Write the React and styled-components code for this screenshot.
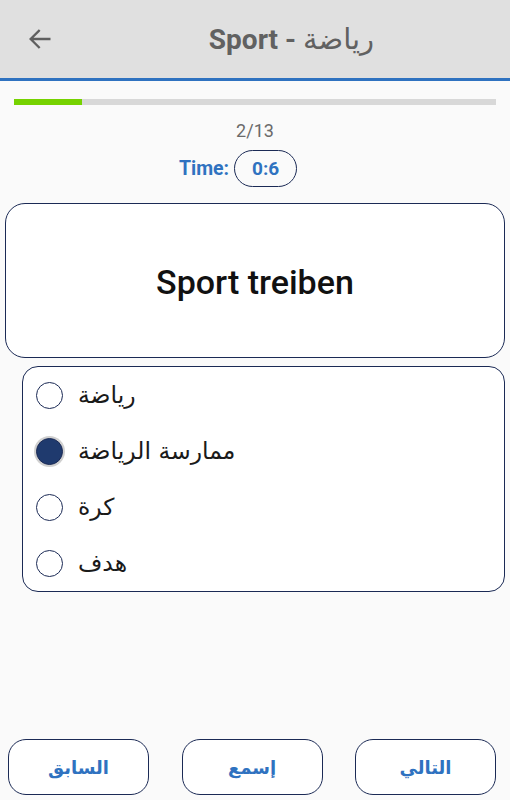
import styled, { createGlobalStyle } from 'styled-components';

const GlobalStyle = createGlobalStyle`
  html, body { margin: 0; padding: 0; background: #fafafa; }
  body { font-family: Roboto, "DejaVu Sans", sans-serif; }
  * { box-sizing: border-box; }
`;

const Page = styled.div`
  width: 510px;
  height: 800px;
  display: flex;
  flex-direction: column;
  background: #fafafa;
  overflow: hidden;
`;

const TopBar = styled.div`
  height: 81px;
  background: #e0e0e0;
  border-bottom: 3px solid #2f72c0;
  display: flex;
  align-items: center;
  padding: 0 0 0 25px;
`;

const BackButton = styled.div`
  width: 30px;
  height: 30px;
  display: flex;
  align-items: center;
  justify-content: center;
  color: #5f5f5f;
`;

const Title = styled.h1`
  flex: 1;
  margin: 0;
  padding-left: 18px;
  text-align: center;
  font-size: 28px;
  font-weight: 700;
  color: #616161;
  font-family: Roboto, "DejaVu Sans", sans-serif;
`;

const TitleArabic = styled.span`
  font-weight: 400;
  font-size: 29px;
`;

const Progress = styled.div`
  margin: 18px 14px 0;
  height: 6px;
  background: #d8d8d8;
`;

const ProgressFill = styled.div`
  height: 100%;
  background: #76d200;
`;

const Counter = styled.div`
  margin-top: 15px;
  text-align: center;
  font-size: 18px;
  color: #6a6a6a;
  line-height: 22px;
`;

const TimeRow = styled.div`
  display: flex;
  justify-content: center;
  align-items: center;
  gap: 5px;
  margin-top: 8px;
  padding-right: 34px;
`;

const TimeLabel = styled.span`
  font-size: 19.5px;
  font-weight: 700;
  color: #2f72c0;
`;

const TimePill = styled.span`
  width: 63px;
  height: 37px;
  border: 1.5px solid #1b2a55;
  border-radius: 19px;
  display: flex;
  align-items: center;
  justify-content: center;
  font-size: 19px;
  font-weight: 700;
  color: #2f72c0;
`;

const WordCard = styled.div`
  margin: 16px 5px 0;
  height: 155px;
  background: #fff;
  border: 1.5px solid #1b2a55;
  border-radius: 20px;
  display: flex;
  align-items: center;
  justify-content: center;
  padding-top: 3px;
  font-size: 34px;
  font-weight: 500;
  color: #111;
`;

const Options = styled.div`
  margin: 8px 5px 0 22px;
  height: 226px;
  background: #fff;
  border: 1.5px solid #1b2a55;
  border-radius: 16px;
  display: flex;
  flex-direction: column;
  justify-content: center;
  padding: 0 0 0 13px;
`;

const Option = styled.label`
  height: 56.5px;
  display: flex;
  align-items: center;
  gap: 15px;
`;

const Radio = styled.span`
  width: 27px;
  height: 27px;
  border-radius: 50%;
  border: 1.5px solid #1b2a55;
  background: ${p => (p.checked ? '#1f3a6e' : '#fff')};
  box-shadow: ${p => (p.checked ? '0 0 0 2px #d0d0d0' : 'none')};
  flex-shrink: 0;
`;

const OptionText = styled.span`
  font-family: "DejaVu Sans", "Noto Sans", sans-serif;
  font-size: 23.5px;
  color: #1a1a1a;
  direction: rtl;
`;

const Spacer = styled.div`
  flex: 1;
`;

const Footer = styled.div`
  display: flex;
  justify-content: space-between;
  padding: 0 14px 5px 8px;
`;

const NavButton = styled.button`
  width: 141px;
  height: 56px;
  background: #fff;
  border: 1.5px solid #1b2a55;
  border-radius: 18px;
  font-family: "DejaVu Sans", sans-serif;
  font-size: 18px;
  font-weight: 700;
  color: #2f72c0;
  direction: rtl;
`;

const options = ['رياضة', 'ممارسة الرياضة', 'كرة', 'هدف'];

export default function App() {
  const selected = 1;
  return (
    <>
      <GlobalStyle />
      <Page>
        <TopBar>
          <BackButton>
            <svg width="28" height="28" viewBox="0 0 24 24" fill="none" stroke="currentColor" strokeWidth="2" strokeLinecap="square">
              <path d="M20 12H5M11 5l-7 7 7 7" />
            </svg>
          </BackButton>
          <Title>
            Sport - <TitleArabic>رياضة</TitleArabic>
          </Title>
        </TopBar>
        <Progress>
          <ProgressFill style={{ width: `${(2 / 13) * 100 * 0.92}%` }} />
        </Progress>
        <Counter>2/13</Counter>
        <TimeRow>
          <TimeLabel>Time:</TimeLabel>
          <TimePill>0:6</TimePill>
        </TimeRow>
        <WordCard>Sport treiben</WordCard>
        <Options>
          {options.map((o, i) => (
            <Option key={o}>
              <Radio checked={i === selected} />
              <OptionText>{o}</OptionText>
            </Option>
          ))}
        </Options>
        <Spacer />
        <Footer>
          <NavButton>السابق</NavButton>
          <NavButton>إسمع</NavButton>
          <NavButton>التالي</NavButton>
        </Footer>
      </Page>
    </>
  );
}
